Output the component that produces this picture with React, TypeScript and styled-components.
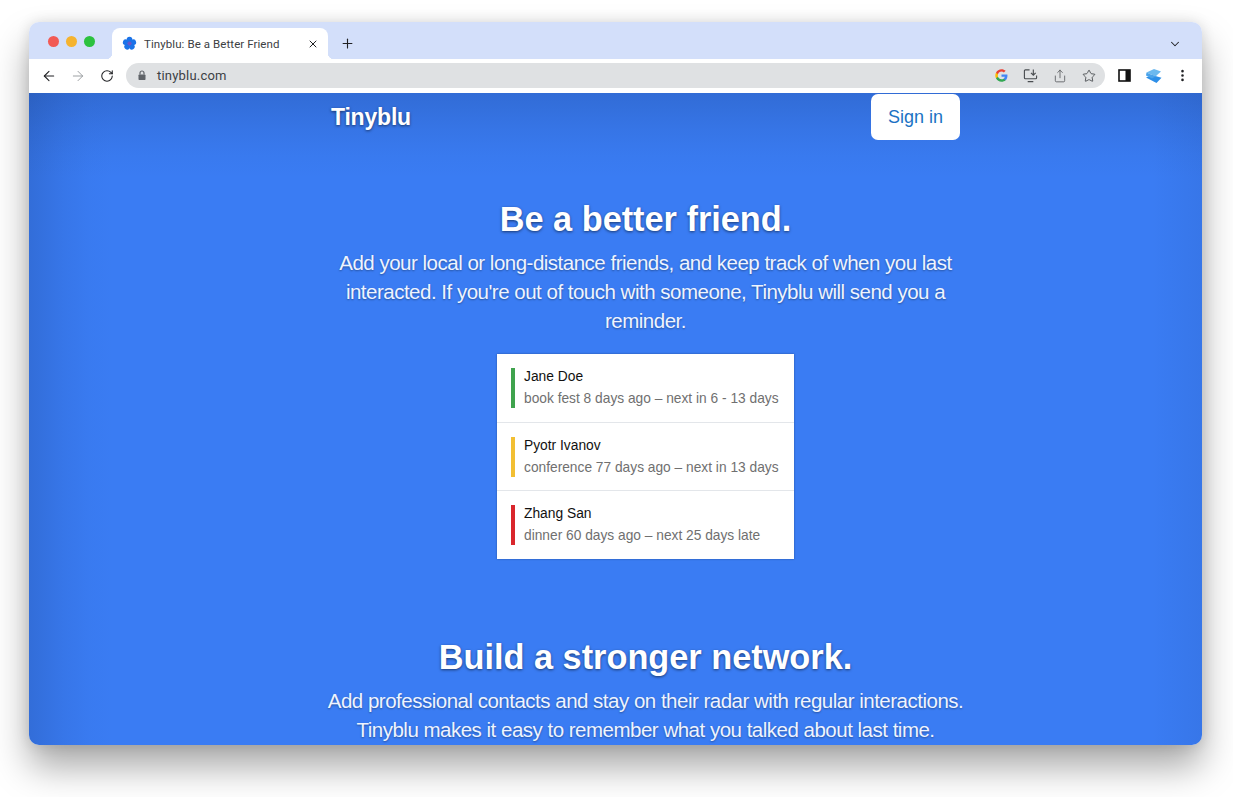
import styled, { createGlobalStyle } from "styled-components";
import { ArrowLeft, ArrowRight, ChevronDown, MoreVertical, Plus, RotateCw, Share, Star, X } from "lucide-react";

const GlobalStyle = createGlobalStyle`
  html, body {
    margin: 0;
    padding: 0;
    background: #ffffff;
    height: 797px;
    overflow: hidden;
  }

  * {
    box-sizing: border-box;
  }
`;

const Stage = styled.div`
  padding: 22px 31px 0 29px;
`;

const Window = styled.div`
  height: 723px;
  display: flex;
  flex-direction: column;
  border-radius: 10px;
  overflow: hidden;
`;

const WindowShadow = styled.div`
  border-radius: 10px;
  box-shadow: 0 22px 36px rgba(0, 0, 0, 0.34), 0 0 14px rgba(0, 0, 0, 0.12);
`;

const TabBar = styled.div`
  height: 37px;
  flex: none;
  display: flex;
  align-items: flex-end;
  background: #d3dffa;
  padding-left: 19px;
`;

const Lights = styled.div`
  display: flex;
  gap: 7px;
  align-self: flex-start;
  margin-top: 13.5px;
  margin-right: 17px;
`;

const Light = styled.span<{ $color: string }>`
  width: 11px;
  height: 11px;
  border-radius: 50%;
  background: ${(props) => props.$color};
`;

const Tab = styled.div`
  position: relative;
  width: 216px;
  height: 31px;
  display: flex;
  align-items: center;
  padding: 0 9px 0 10px;
  background: #ffffff;
  border-radius: 8px 8px 0 0;

  &::before,
  &::after {
    content: "";
    position: absolute;
    bottom: 0;
    width: 6px;
    height: 6px;
  }

  &::before {
    left: -6px;
    background: radial-gradient(circle at 0 0, transparent 6px, #ffffff 6.5px);
  }

  &::after {
    right: -6px;
    background: radial-gradient(circle at 100% 0, transparent 6px, #ffffff 6.5px);
  }
`;

const TabTitle = styled.span`
  flex: 1;
  margin-left: 7px;
  font-family: Roboto, "Liberation Sans", sans-serif;
  font-size: 11.5px;
  letter-spacing: 0.08px;
  color: #3c4043;
  white-space: nowrap;
`;

const NewTab = styled.div`
  width: 38px;
  height: 31px;
  display: flex;
  align-items: center;
  justify-content: center;
  color: #202124;
`;

const TabChevron = styled.div`
  margin-left: auto;
  width: 54px;
  height: 31px;
  display: flex;
  align-items: center;
  justify-content: center;
  color: #202124;
`;

const Toolbar = styled.div`
  height: 34px;
  flex: none;
  display: flex;
  align-items: flex-start;
  padding: 4px 5px 0 5px;
  background: #ffffff;
`;

const IconButton = styled.div<{ $muted?: boolean }>`
  width: 29px;
  height: 25px;
  flex: none;
  display: flex;
  align-items: center;
  justify-content: center;
  color: ${(props) => (props.$muted ? "#8f9296" : "#202124")};
`;

const UrlBar = styled.div`
  flex: 1;
  height: 25px;
  margin: 0 5px;
  display: flex;
  align-items: center;
  padding: 0 2px 0 11px;
  border-radius: 13px;
  background: #dfe1e3;
`;

const UrlText = styled.span`
  flex: 1;
  margin-left: 10px;
  font-family: Roboto, "Liberation Sans", sans-serif;
  font-size: 13px;
  letter-spacing: 0.2px;
  color: #3c4043;
`;

const Page = styled.main`
  flex: 1;
  min-height: 0;
  overflow: hidden;
  position: relative;
  background: #3a7cf3;
  padding-left: 302px;

  &::after {
    content: "";
    position: absolute;
    inset: 0;
    pointer-events: none;
    background:
      linear-gradient(to bottom, rgba(20, 50, 110, 0.22), rgba(20, 50, 110, 0.1) 35px, rgba(20, 50, 110, 0.03) 62px, rgba(20, 50, 110, 0) 85px),
      linear-gradient(to right, rgba(20, 50, 110, 0.2), rgba(20, 50, 110, 0.08) 35px, rgba(20, 50, 110, 0.02) 62px, rgba(20, 50, 110, 0) 85px),
      linear-gradient(to left, rgba(20, 50, 110, 0.08), rgba(20, 50, 110, 0) 50px);
  }
`;

const Column = styled.div`
  position: relative;
  z-index: 1;
  width: 629px;
`;

const Nav = styled.nav`
  height: 48px;
  display: flex;
  align-items: center;
  justify-content: space-between;
`;

const Brand = styled.a`
  font-family: "Liberation Sans", Arial, sans-serif;
  font-size: 23px;
  font-weight: 700;
  letter-spacing: -0.2px;
  margin-top: 1px;
  color: #ffffff;
  text-shadow: 0 1px 3px rgba(0, 0, 0, 0.55);
`;

const SignIn = styled.button`
  width: 89px;
  height: 46px;
  border: 0;
  border-radius: 7px;
  background: #ffffff;
  font-family: "Liberation Sans", Arial, sans-serif;
  font-size: 18px;
  color: #1b72c4;
`;

const Section = styled.section<{ $gap: number }>`
  display: flex;
  flex-direction: column;
  align-items: center;
  padding-top: ${(props) => props.$gap}px;
`;

const Heading = styled.h1`
  margin: 0;
  font-family: "Liberation Sans", Arial, sans-serif;
  font-size: 34.3px;
  line-height: 44px;
  font-weight: 700;
  color: #ffffff;
  text-shadow: 0 1px 3px rgba(0, 0, 0, 0.55);
`;

const Lead = styled.p`
  margin: 7px 0 0;
  text-align: center;
  font-family: "Liberation Sans", Arial, sans-serif;
  font-size: 20.5px;
  line-height: 29px;
  letter-spacing: -0.5px;
  color: #eef4ff;
  text-shadow: 0 1px 2px rgba(0, 0, 0, 0.35);
  white-space: nowrap;
`;

const Card = styled.div`
  width: 297px;
  margin-top: 19px;
  padding-bottom: 1px;
  background: #ffffff;
  box-shadow: 0 0 2px rgba(0, 0, 0, 0.35);
`;

const Row = styled.div`
  height: 68px;
  display: flex;
  gap: 9px;
  padding: 14px 14px 0;

  & + & {
    border-top: 1px solid #e3e6ea;
  }
`;

const Bar = styled.span<{ $color: string }>`
  flex: none;
  width: 4px;
  height: 40px;
  background: ${(props) => props.$color};
`;

const Name = styled.div`
  font-family: "Liberation Sans", Arial, sans-serif;
  font-size: 13.8px;
  line-height: 17px;
  color: #111111;
`;

const Detail = styled.div`
  margin-top: 5px;
  font-family: "Liberation Sans", Arial, sans-serif;
  font-size: 13.75px;
  line-height: 18px;
  color: #707070;
  white-space: nowrap;
`;

const flowerPetals = [0, 72, 144, 216, 288];

function Flower() {
  return (
    <svg width="15" height="15" viewBox="0 0 16 16">
      {flowerPetals.map((angle) => (
        <circle key={angle} cx="8" cy="3.7" r="3" fill="#1b73e8" transform={`rotate(${angle} 8 8)`} />
      ))}
      <circle cx="8" cy="8" r="2.200" fill="#6a55c8" />
    </svg>
  );
}

function LockIcon() {
  return (
    <svg width="10" height="11" viewBox="0 0 10 11">
      <path d="M3 4.500V3a2 2 0 0 1 4 0v1.500" fill="none" stroke="#5f6368" strokeWidth="1.200" />
      <rect x="1.500" y="4.500" width="7" height="5.500" rx="0.800" fill="#5f6368" />
    </svg>
  );
}

function GoogleLogo() {
  return (
    <svg width="13" height="13" viewBox="0 0 24 24">
      <path fill="#4285f4" d="M23 12.300c0-.8-.1-1.600-.2-2.300H12v4.500h6.200c-.3 1.400-1.100 2.600-2.300 3.400v2.800h3.700c2.200-2 3.400-5 3.400-8.400z" />
      <path fill="#34a853" d="M12 23.500c3.100 0 5.700-1 7.600-2.800l-3.700-2.800c-1 .7-2.300 1.100-3.900 1.100-3 0-5.500-2-6.400-4.700H1.800v2.900c1.900 3.800 5.800 6.300 10.200 6.300z" />
      <path fill="#fbbc05" d="M5.600 14.300c-.5-1.400-.5-3 0-4.500V6.900H1.800c-1.600 3.200-1.600 7 0 10.300l3.800-2.900z" />
      <path fill="#ea4335" d="M12 4.800c1.700 0 3.200.6 4.400 1.700l3.300-3.300C17.700 1.400 15.100.3 12 .3 7.600.3 3.700 2.900 1.800 6.700l3.800 2.900c.9-2.800 3.400-4.800 6.400-4.800z" />
    </svg>
  );
}

function InstallIcon() {
  return (
    <svg width="15" height="15" viewBox="0 0 16 16" fill="none" stroke="#4a4d51" strokeWidth="1.200">
      <path d="M7 2H2.500a1 1 0 0 0-1 1v7.500a1 1 0 0 0 1 1h11a1 1 0 0 0 1-1V8" />
      <path d="M5 14.500h6M11 1.500v6M8.500 5.200 11 7.700l2.500-2.500" />
    </svg>
  );
}

function SidePanelIcon() {
  return (
    <svg width="13" height="13" viewBox="0 0 13 13">
      <rect x="1" y="1" width="11" height="11" fill="#ffffff" stroke="#111111" strokeWidth="1.600" />
      <rect x="7.500" y="1" width="4.500" height="11" fill="#111111" />
    </svg>
  );
}

function ExtensionIcon() {
  return (
    <svg width="18" height="16" viewBox="0 0 18 16">
      <path fill="#2d8fe8" d="M1 9.500 7 7l9.500 2.800-5 5.200z" />
      <path fill="#6cb9ef" d="M1.500 4.500 9 1l7 2.500-5.500 5z" />
      <path fill="#4aa3ea" d="M1.500 4.500 10.500 8.500 7 10.500 1 7.500z" />
    </svg>
  );
}

const contacts = [
  { name: "Jane Doe", detail: "book fest 8 days ago – next in 6 - 13 days", color: "#3fa34d" },
  { name: "Pyotr Ivanov", detail: "conference 77 days ago – next in 13 days", color: "#f2bf33" },
  { name: "Zhang San", detail: "dinner 60 days ago – next 25 days late", color: "#d9262c" },
];

export default function App() {
  return (
    <Stage>
      <GlobalStyle />
      <WindowShadow>
        <Window>
          <TabBar>
            <Lights>
              <Light $color="#f25a55" />
              <Light $color="#f5b32f" />
              <Light $color="#2cc23f" />
            </Lights>
            <Tab>
              <Flower />
              <TabTitle>Tinyblu: Be a Better Friend</TabTitle>
              <X size={12} strokeWidth={2} color="#202124" />
            </Tab>
            <NewTab>
              <Plus size={15} strokeWidth={1.8} />
            </NewTab>
            <TabChevron>
              <ChevronDown size={14} strokeWidth={1.8} />
            </TabChevron>
          </TabBar>
          <Toolbar>
            <IconButton><ArrowLeft size={16} strokeWidth={1.6} /></IconButton>
            <IconButton $muted><ArrowRight size={16} strokeWidth={1.3} /></IconButton>
            <IconButton><RotateCw size={14} strokeWidth={1.8} /></IconButton>
            <UrlBar>
              <LockIcon />
              <UrlText>tinyblu.com</UrlText>
              <IconButton><GoogleLogo /></IconButton>
              <IconButton><InstallIcon /></IconButton>
              <IconButton><Share size={14} strokeWidth={1.3} color="#4a4d51" /></IconButton>
              <IconButton><Star size={14} strokeWidth={1.4} color="#3c4043" /></IconButton>
            </UrlBar>
            <IconButton><SidePanelIcon /></IconButton>
            <IconButton><ExtensionIcon /></IconButton>
            <IconButton><MoreVertical size={15} strokeWidth={2.2} /></IconButton>
          </Toolbar>
          <Page>
            <Column>
              <Nav>
                <Brand>Tinyblu</Brand>
                <SignIn>Sign in</SignIn>
              </Nav>
              <Section $gap={56}>
                <Heading>Be a better friend.</Heading>
                <Lead>
                  Add your local or long-distance friends, and keep track of when you last
                  <br />
                  interacted. If you're out of touch with someone, Tinyblu will send you a
                  <br />
                  reminder.
                </Lead>
                <Card>
                  {contacts.map((contact) => (
                    <Row key={contact.name}>
                      <Bar $color={contact.color} />
                      <div>
                        <Name>{contact.name}</Name>
                        <Detail>{contact.detail}</Detail>
                      </div>
                    </Row>
                  ))}
                </Card>
              </Section>
              <Section $gap={76}>
                <Heading>Build a stronger network.</Heading>
                <Lead>
                  Add professional contacts and stay on their radar with regular interactions.
                  <br />
                  Tinyblu makes it easy to remember what you talked about last time.
                </Lead>
              </Section>
            </Column>
          </Page>
        </Window>
      </WindowShadow>
    </Stage>
  );
}
